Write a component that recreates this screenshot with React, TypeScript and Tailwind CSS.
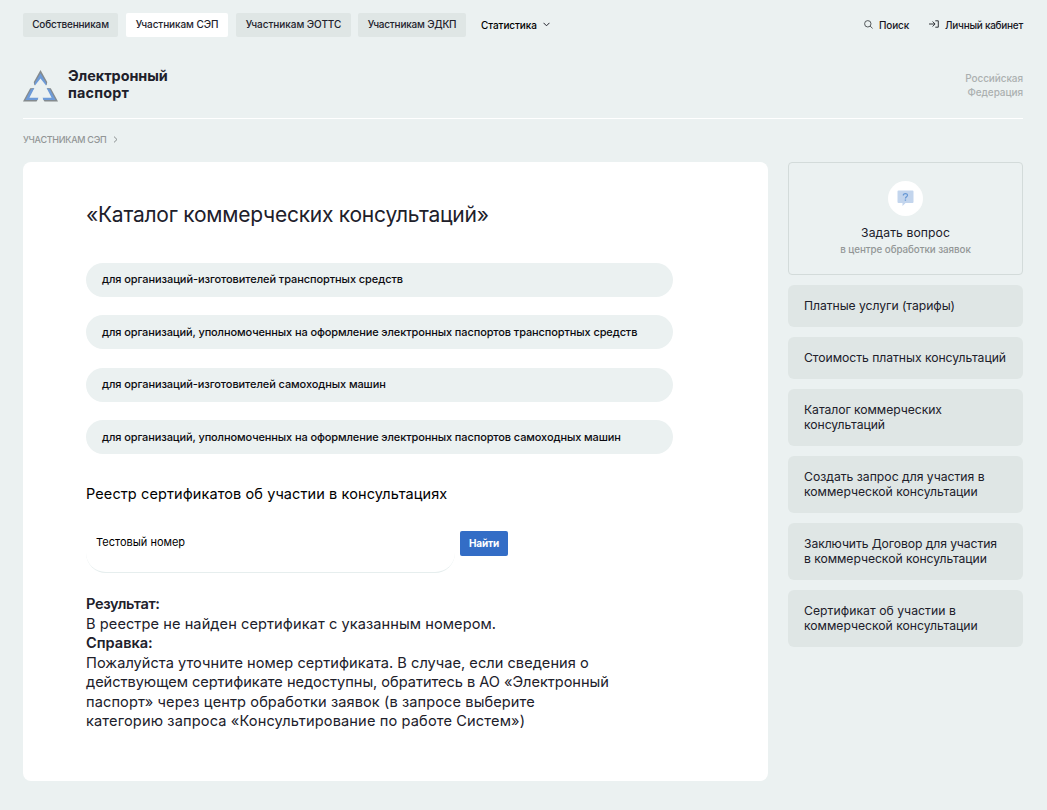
import type { ReactNode } from "react";

const tabs = [
  { text: "Собственникам", width: "w-[95px]", tracking: "tracking-[-0.16px]", active: false },
  { text: "Участникам СЭП", width: "w-[102px]", tracking: "tracking-[-0.09px]", active: true },
  { text: "Участникам ЭОТТС", width: "w-[115px]", tracking: "tracking-[-0.05px]", active: false },
  { text: "Участникам ЭДКП", width: "w-[108px]", tracking: "tracking-[-0.2px]", active: false },
];

const catalog = [
  { text: "для организаций-изготовителей транспортных средств", style: "mb-[18px] tracking-[-0.08px] pb-px" },
  { text: "для организаций, уполномоченных на оформление электронных паспортов транспортных средств", style: "mb-[19px] tracking-[-0.11px]" },
  { text: "для организаций-изготовителей самоходных машин", style: "mb-[18px] tracking-[-0.09px] pb-px" },
  { text: "для организаций, уполномоченных на оформление электронных паспортов самоходных машин", style: "tracking-[-0.11px]" },
];

const result = [
  { text: "Результат:", style: "font-semibold tracking-[-0.36px]" },
  { text: "В реестре не найден сертификат с указанным номером.", style: "tracking-[0.07px]" },
  { text: "Справка:", style: "font-semibold tracking-[-0.02px]" },
  { text: "Пожалуйста уточните номер сертификата. В случае, если сведения о", style: "tracking-[0.03px]" },
  { text: "действующем сертификате недоступны, обратитесь в АО «Электронный", style: "tracking-[-0.035px]" },
  { text: "паспорт» через центр обработки заявок (в запросе выберите", style: "tracking-[0.09px]" },
  { text: "категорию запроса «Консультирование по работе Систем»)", style: "tracking-[0.13px]" },
];

const services = [
  [{ text: "Платные услуги (тарифы)", tracking: "tracking-[-0.06px]" }],
  [{ text: "Стоимость платных консультаций", tracking: "tracking-[-0.05px]" }],
  [
    { text: "Каталог коммерческих", tracking: "tracking-[-0.07px]" },
    { text: "консультаций", tracking: "tracking-[-0.06px]" },
  ],
  [
    { text: "Создать запрос для участия в", tracking: "tracking-normal" },
    { text: "коммерческой консультации", tracking: "tracking-[-0.02px]" },
  ],
  [
    { text: "Заключить Договор для участия", tracking: "tracking-[-0.1px]" },
    { text: "в коммерческой консультации", tracking: "tracking-[-0.06px]" },
  ],
  [
    { text: "Сертификат об участии в", tracking: "tracking-[0.04px]" },
    { text: "коммерческой консультации", tracking: "tracking-[-0.02px]" },
  ],
];

function Logo() {
  return (
    <svg width="35" height="32" viewBox="0 0 35 32" className="shrink-0">
      <path d="M17.5 0 24.2 12 23.8 15.4 17.5 5.2 11.2 15.4 10.8 12Z" fill="#858b8e" />
      <path d="M17.5 3.2 23.4 13.2 23 15.6 17.5 8.4 12 15.6 11.6 13.2Z" fill="#6e9bd8" />
      <path d="M7.2 18.2 11.2 18 4.2 29.2H15L13.5 31.5H0Z" fill="#858b8e" />
      <path d="M8 19.2 11.4 18 6.4 27.8H15.4L14.5 30H2.4Z" fill="#6e9bd8" />
      <path d="M27.8 18.2 23.8 18 30.8 29.2H20L21.5 31.5H35Z" fill="#858b8e" />
      <path d="M27 19.2 23.6 18 28.6 27.8H19.6L20.5 30H32.6Z" fill="#6e9bd8" />
    </svg>
  );
}

function HeaderLink({ icon, children }: { icon: ReactNode; children: ReactNode }) {
  return (
    <a className="flex h-6 items-center gap-[6px] whitespace-nowrap text-[10px] leading-[14px] text-[#17171f]">
      {icon}
      {children}
    </a>
  );
}

function Header() {
  return (
    <header>
      <div className="flex h-6 justify-between">
        <nav className="flex">
          <div className="flex gap-2">
            {tabs.map((tab) => (
              <a
                key={tab.text}
                className={`flex h-6 items-center justify-center whitespace-nowrap rounded-[2px] pb-px text-[10px] font-medium text-[#22222c] last:-ml-px ${tab.width} ${tab.tracking} ${tab.active ? "bg-white" : "bg-[#dfe6e5]"}`}
              >
                {tab.text}
              </a>
            ))}
          </div>
          <a className="ml-[15px] flex items-center gap-[6px] pt-px text-[10px] font-medium tracking-[-0.08px] text-black">
            Статистика
            <svg width="7" height="5" viewBox="0 0 7 5" fill="none" stroke="#22222c" className="-mt-[2px]">
              <path d="M.5.8 3.5 3.8 6.5.8" />
            </svg>
          </a>
        </nav>
        <div className="flex gap-5 font-medium">
          <HeaderLink
            icon={
              <svg width="9" height="9" viewBox="0 0 9 9" fill="none" stroke="#44484c" strokeWidth="0.9" className="-mt-[2px]">
                <circle cx="3.8" cy="3.8" r="3.2" />
                <path d="M6.1 6.1 8.6 8.4" />
              </svg>
            }
          >
            <span className="tracking-[-0.16px]">Поиск</span>
          </HeaderLink>
          <HeaderLink
            icon={
              <svg width="10" height="8" viewBox="0 0 10 8" fill="none" stroke="#33363b" className="-mt-[2px]">
                <path d="M0 4H6M3.6 1.5 6.1 4 3.6 6.5M6.3.8H9.3V7.2H6.3" />
              </svg>
            }
          >
            <span className="tracking-[-0.26px]">Личный кабинет</span>
          </HeaderLink>
        </div>
      </div>
      <div className="mt-[29px] flex h-[53px] justify-between border-b border-white">
        <a className="flex h-9 items-end gap-[10px]">
          <Logo />
          <span className="flex flex-col pb-px text-[14.4px] font-bold leading-[17px] tracking-[-0.03px] text-[#20202a]">
            <span>Электронный</span>
            <span className="tracking-[0.2px]">паспорт</span>
          </span>
        </a>
        <p className="mt-[5px] text-right text-[10px] font-medium leading-[14px] tracking-[-0.08px] text-[#abb0b0]">
          Российская
          <br />
          Федерация
        </p>
      </div>
      <div className="flex h-[42px] items-center gap-[7px] text-[9px] font-medium tracking-[-0.28px] text-[#929696]">
        УЧАСТНИКАМ СЭП
        <svg width="5" height="7" viewBox="0 0 5 7" fill="none" stroke="#8a8f90" className="-mt-px">
          <path d="M1 .6 4 3.5 1 6.4" />
        </svg>
      </div>
    </header>
  );
}

function Catalog() {
  return (
    <main className="h-[619px] w-[745px] rounded-lg bg-white pl-[63px] pt-[38px]">
      <h1 className="whitespace-nowrap text-[21px] leading-[30px] tracking-[-0.24px] text-[#20202a]">
        «Каталог коммерческих консультаций»
      </h1>
      <ul className="mt-[33px] w-[587px]">
        {catalog.map((item) => (
          <li
            key={item.text}
            className={`flex h-[34px] items-center whitespace-nowrap rounded-full bg-[#ebf1f1] pl-4 text-[11px] font-medium text-[#0b0b10] ${item.style}`}
          >
            {item.text}
          </li>
        ))}
      </ul>
      <h2 className="mt-[30px] whitespace-nowrap text-[14.5px] leading-[20px] tracking-[0.1px] text-black">
        Реестр сертификатов об участии в консультациях
      </h2>
      <form className="mt-[8px] flex gap-[5px]">
        <div className="h-[61px] w-[369px] rounded-b-[20px] border-b border-[#e6eeee] pl-[10px] pt-[22px] text-[11px] leading-[16px] text-black">
          Тестовый номер
        </div>
        <button
          type="button"
          className="mt-[19px] flex h-[25px] w-12 items-center justify-center rounded-[2px] bg-[#336dc6] pb-px text-[10px] font-bold tracking-[-0.2px] text-white"
        >
          Найти
        </button>
      </form>
      <div className="mt-[22px] text-[14.6px] leading-[19.5px] text-[#20202a]">
        {result.map((line) => (
          <p key={line.text} className={`whitespace-nowrap ${line.style}`}>
            {line.text}
          </p>
        ))}
      </div>
    </main>
  );
}

function Sidebar() {
  return (
    <aside className="flex w-[235px] flex-col gap-[10px]">
      <a className="flex h-[113px] flex-col items-center rounded border border-[#d3dbda] pt-[18px]">
        <span className="flex size-[35px] items-center justify-center rounded-full bg-white">
          <svg width="17" height="17" viewBox="0 0 17 17">
            <path d="M1.5.5H15.5Q16.5.5 16.5 1.5V12Q16.5 13 15.5 13H8.5L5.5 16V13H1.5Q.5 13 .5 12V1.5Q.5.5 1.5.5Z" fill="#c3d5ed" />
            <path d="M6.3 5.4C6.3 3.1 10.5 3 10.5 5.3 10.5 6.8 8.4 6.7 8.4 8.5" fill="none" stroke="#6798d4" strokeWidth="1.2" />
            <path d="M7.7 9.5H9.1V10.7H7.7Z" fill="#6798d4" />
          </svg>
        </span>
        <span className="mt-[9px] text-[12.2px] leading-[16px] tracking-[0.06px] text-[#20202a]">Задать вопрос</span>
        <span className="mt-[2px] text-[9.8px] font-medium leading-[14px] tracking-[-0.06px] text-[#929696]">
          в центре обработки заявок
        </span>
      </a>
      {services.map((lines) => (
        <a
          key={lines[0].text}
          className="flex flex-col rounded-md bg-[#dfe6e5] px-4 pb-[14px] pt-[13px] text-[12.2px] leading-[15px] text-[#20202a]"
        >
          {lines.map((line) => (
            <span key={line.text} className={`whitespace-nowrap ${line.tracking}`}>
              {line.text}
            </span>
          ))}
        </a>
      ))}
    </aside>
  );
}

export default function App() {
  return (
    <div className="h-[810px] w-[1047px] overflow-hidden bg-[#ebf1f1] px-[23px] pt-[13px] font-['Inter','Liberation_Sans',sans-serif] pr-6">
      <Header />
      <div className="mt-px flex items-start gap-5">
        <Catalog />
        <Sidebar />
      </div>
    </div>
  );
}
